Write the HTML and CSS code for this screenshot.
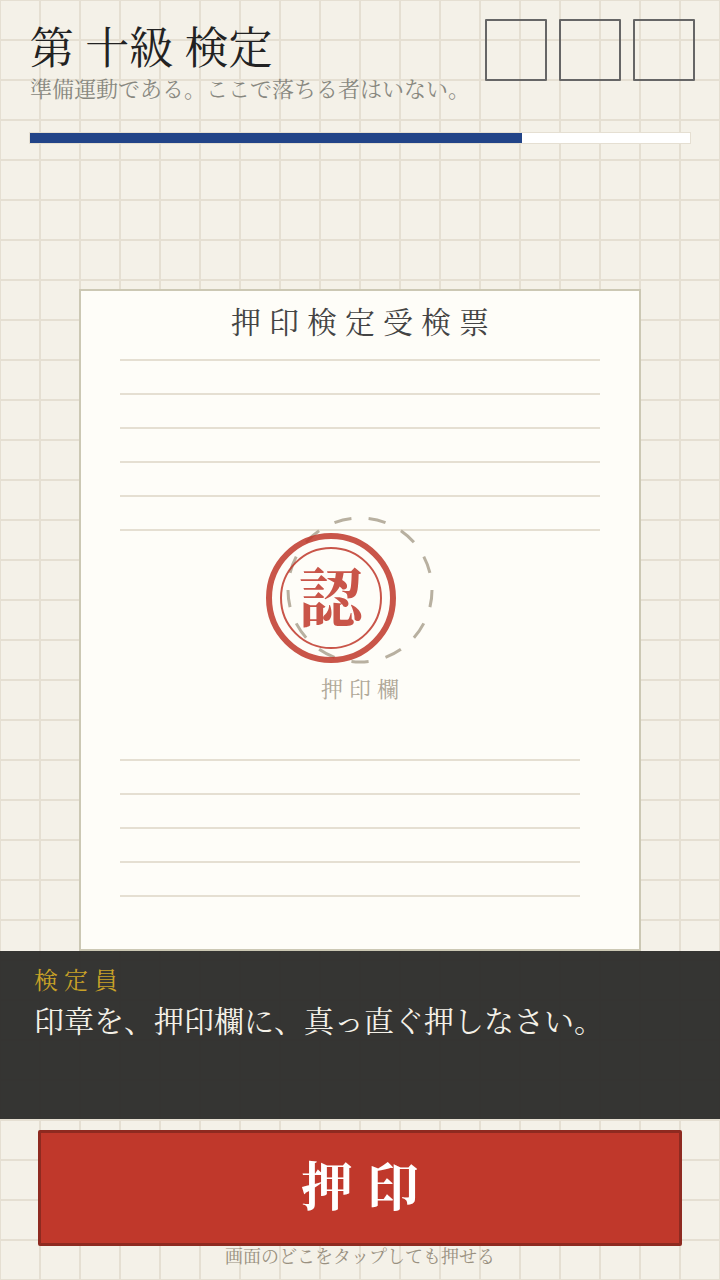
FILE: index.html
```html
<!DOCTYPE html>
<html lang="ja">
<head>
<meta charset="utf-8">
<meta name="viewport" content="width=device-width, initial-scale=1">
<title>押印検定</title>
<link rel="stylesheet" href="styles.css">
</head>
<body>
<header class="header">
  <div class="heading">
    <h1 class="title">第 十級 検定</h1>
    <p class="subtitle">準備運動である。ここで落ちる者はいない。</p>
  </div>
  <div class="marks">
    <span class="mark"></span>
    <span class="mark"></span>
    <span class="mark"></span>
  </div>
</header>
<progress class="timer" value="74.5" max="100" aria-label="残り時間"></progress>
<main class="desk">
  <article class="paper">
    <h2 class="paper-title">押印検定受検票</h2>
    <div class="rules">
      <div class="rule"></div><div class="rule"></div><div class="rule"></div>
      <div class="rule"></div><div class="rule"></div><div class="rule"></div>
    </div>
    <svg class="slot" width="200" height="160" viewBox="0 0 200 160">
      <circle class="slot-ring" cx="100" cy="80" r="72" pathLength="26"/>
      <g class="stamp">
        <circle class="stamp-outer" cx="71" cy="88" r="62"/>
        <circle class="stamp-inner" cx="71" cy="88" r="50"/>
        <text class="stamp-text" x="71" y="111">認</text>
      </g>
    </svg>
    <p class="slot-label">押印欄</p>
    <div class="rules rules-short">
      <div class="rule"></div><div class="rule"></div><div class="rule"></div>
      <div class="rule"></div><div class="rule"></div>
    </div>
  </article>
</main>
<section class="dialog">
  <p class="speaker">検定員</p>
  <p class="speech">印章を、押印欄に、真っ直ぐ押しなさい。</p>
</section>
<footer class="footer">
  <button class="press" type="button">押印</button>
  <p class="hint">画面のどこをタップしても押せる</p>
</footer>
</body>
</html>
```
FILE: styles.css
```css
* {
  box-sizing: border-box;
}

body {
  margin: 0;
  min-height: 100vh;
  display: flex;
  flex-direction: column;
  font-family: "Noto Serif CJK JP", "Noto Serif JP", serif;
  color: #222222;
  background-color: #f4f1e8;
  background-image:
    linear-gradient(to right, #e5dfd2 2px, transparent 2px),
    linear-gradient(to bottom, #e5dfd2 2px, transparent 2px);
  background-size: 40px 40px;
  background-position: -1px -1px;
}

h1, h2, p {
  margin: 0;
  font-weight: 400;
}

.header {
  display: flex;
  justify-content: space-between;
  padding: 19px 25px 0 30px;
}

.heading {
  padding-top: 2px;
}

.title {
  font-size: 44px;
  line-height: 48px;
}

.subtitle {
  margin-top: 5px;
  font-size: 22px;
  line-height: 28px;
  color: #888880;
}

.marks {
  display: flex;
  gap: 12px;
}

.mark {
  width: 62px;
  height: 62px;
  border: 2px solid #666666;
  border-radius: 1px;
}

.timer {
  appearance: none;
  display: block;
  width: auto;
  height: 10px;
  margin: 31px 30px 0;
  border: 0;
  outline: 1px solid #e5dfd2;
  background: #ffffff;
}

.timer::-webkit-progress-bar {
  background: #ffffff;
}

.timer::-webkit-progress-value {
  background: #224488;
}

.desk {
  flex: 1;
  display: flex;
  flex-direction: column;
  justify-content: flex-end;
  padding: 0 79px;
}

.paper {
  display: flex;
  flex-direction: column;
  padding: 8px 39px 52px;
  border: 2px solid #ccc8b4;
  background: #fefdf8;
}

.paper-title {
  padding-left: 8px;
  font-size: 30px;
  line-height: 42px;
  letter-spacing: 8px;
  text-align: center;
  color: #444444;
}

.rules {
  display: flex;
  flex-direction: column;
  gap: 32px;
  margin-top: 18px;
}

.rules-short {
  margin: 57px 20px 0 0;
}

.rule {
  height: 2px;
  background: #e5dfd2;
}

.slot {
  align-self: center;
  margin-top: -21px;
}

.slot-ring {
  fill: none;
  stroke: #b8b0a0;
  stroke-width: 3;
  stroke-dasharray: 1 1;
}

.stamp {
  opacity: 0.85;
}

.stamp-outer,
.stamp-inner {
  fill: none;
  stroke: #c0382b;
}

.stamp-outer {
  stroke-width: 6;
}

.stamp-inner {
  stroke-width: 2;
}

.stamp-text {
  fill: #c0382b;
  font-size: 64px;
  font-weight: 700;
  text-anchor: middle;
}

.slot-label {
  margin-top: 4px;
  padding-left: 6px;
  font-size: 22px;
  line-height: 28px;
  letter-spacing: 6px;
  text-align: center;
  color: #b0a898;
}

.dialog {
  min-height: 168px;
  padding: 12px 34px;
  background: rgba(46, 46, 44, 0.97);
}

.speaker {
  font-size: 24px;
  line-height: 32px;
  letter-spacing: 6px;
  color: #c9a227;
}

.speech {
  margin-top: 3px;
  font-size: 30px;
  line-height: 42px;
  color: #f4f1e8;
}

.footer {
  padding: 11px 38px 16px;
}

.press {
  display: block;
  width: 100%;
  height: 116px;
  padding: 0 0 10px 14px;
  border: 3px solid #8e2a20;
  border-radius: 2px;
  background: #c0382b;
  color: #ffffff;
  font-family: inherit;
  font-size: 52px;
  font-weight: 700;
  letter-spacing: 14px;
}

.hint {
  font-size: 18px;
  line-height: 18px;
  text-align: center;
  color: #999080;
}
```
